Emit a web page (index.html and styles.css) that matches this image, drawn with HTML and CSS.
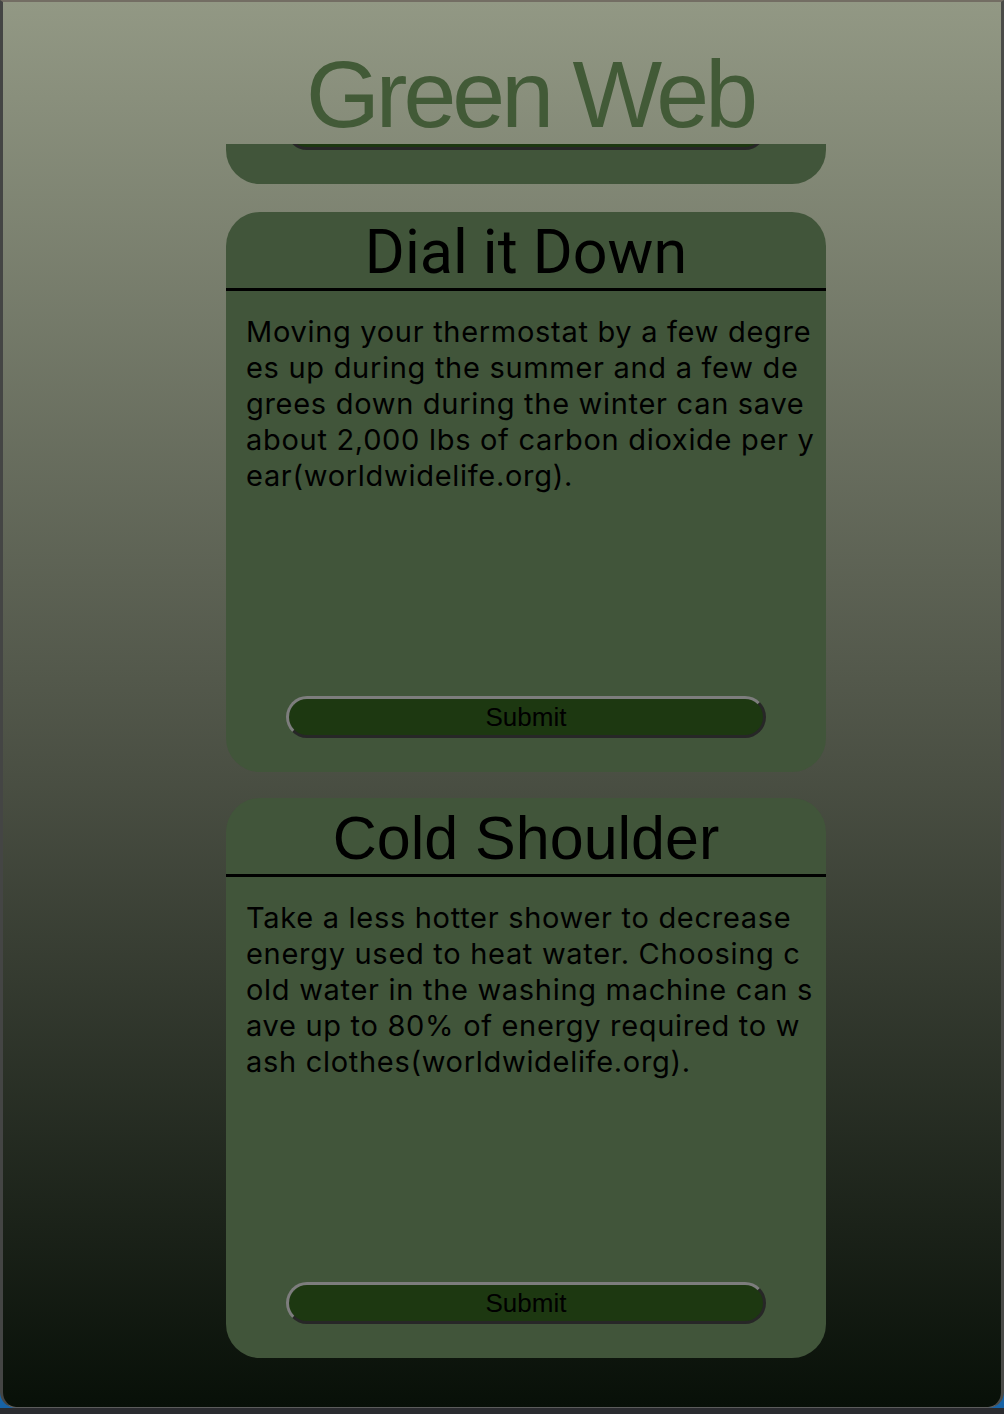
FILE: index.html
```html
<!DOCTYPE html>
<html lang="en">
<head>
<meta charset="utf-8">
<title>Green Web</title>
<link rel="stylesheet" href="styles.css">
</head>
<body>
<div class="screen">
  <div class="window">
    <header class="top">
      <h1 class="brand">Green Web</h1>
    </header>
    <main class="feed">
      <div class="card-tail">
        <div class="tail-clip"><span class="btn btn-ghost"></span></div>
      </div>
      <section class="card">
        <h2 class="card-title roboto">Dial it Down</h2>
        <p class="card-text">Moving your thermostat by a few degrees up during the summer and a few degrees down during the winter can save about 2,000 lbs of carbon dioxide per year(worldwidelife.org).</p>
        <button class="btn" type="button">Submit</button>
      </section>
      <section class="card">
        <h2 class="card-title arial">Cold Shoulder</h2>
        <p class="card-text">Take a less hotter shower to decrease energy used to heat water. Choosing cold water in the washing machine can save up to 80% of energy required to wash clothes(worldwidelife.org).</p>
        <button class="btn" type="button">Submit</button>
      </section>
    </main>
  </div>
</div>
</body>
</html>
```

FILE: styles.css
```css
html, body {
  margin: 0;
  padding: 0;
}

body {
  background: #2a2b2f;
  width: 1004px;
  height: 1414px;
  overflow: hidden;
}

.screen {
  background: #1763a6;
  height: 1408px;
}

.window {
  box-sizing: border-box;
  height: 1408px;
  border-top: 2px solid #736d63;
  border-left: 3px solid #444544;
  border-right: 3px solid #4a4b48;
  border-bottom: 1px solid #5c5c5c;
  border-radius: 0 0 16px 16px;
  background: linear-gradient(to bottom, #929884 0%, #4a4f43 55%, #081008 100%);
  overflow: hidden;
}

.top {
  padding-top: 42px;
  height: 100px;
  display: flex;
  justify-content: center;
  padding-left: 56px;
}

.brand {
  margin: 0;
  font-family: "Liberation Sans", Arial, sans-serif;
  font-weight: 400;
  font-size: 95px;
  line-height: 100px;
  letter-spacing: -4px;
  color: #425a37;
}

.feed {
  display: flex;
  flex-direction: column;
  align-items: center;
  gap: 26px;
  padding-left: 48px;
}

.card-tail {
  width: 600px;
  height: 40px;
  margin-bottom: 2px;
  background: #41553a;
  border-radius: 0 0 34px 34px;
  display: flex;
  justify-content: center;
}

.tail-clip {
  height: 6px;
  overflow: hidden;
  display: flex;
  align-items: flex-end;
}

.card {
  box-sizing: border-box;
  width: 600px;
  height: 560px;
  background: #41553a;
  border-radius: 34px;
  display: flex;
  flex-direction: column;
  align-items: stretch;
}

.card-title {
  margin: 0;
  padding-top: 4px;
  height: 72px;
  line-height: 72px;
  font-size: 61px;
  font-weight: 400;
  text-align: center;
  color: #000;
  border-bottom: 3px solid #000;
}

.roboto {
  font-family: Roboto, "Liberation Sans", sans-serif;
}

.arial {
  font-family: "Liberation Sans", Arial, sans-serif;
}

.card-text {
  margin: 23px 10px 0 20px;
  font-family: Inter, "Noto Sans", sans-serif;
  font-size: 29px;
  letter-spacing: 0.7px;
  line-height: 36px;
  color: #000;
  word-break: break-all;
}

.btn {
  box-sizing: border-box;
  display: block;
  flex: none;
  width: 480px;
  height: 42px;
  padding: 0;
  margin: auto auto 34px;
  background: #1d3811;
  border: 3px solid;
  border-color: #7d7d7d #272727 #272727 #7d7d7d;
  border-radius: 21px;
  font-family: "Liberation Sans", Arial, sans-serif;
  font-size: 26px;
  line-height: 36px;
  color: #000;
  text-align: center;
}

.tail-clip .btn {
  margin: 0;
}
```
